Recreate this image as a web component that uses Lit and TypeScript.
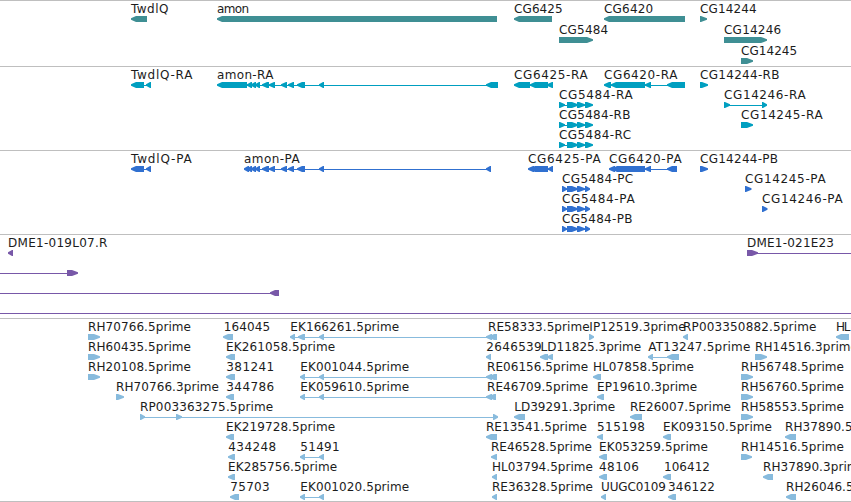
import { css, html, LitElement, svg } from "lit";
import { customElement, property } from "lit/decorators.js";

type Span = [number, number];

interface Feature {
  row: number;
  dir: "L" | "R";
  exons: Span[];
  label?: string;
  text?: Span; // left and right edge of the label
  line?: Span; // connector, when it reaches past the exons
}

interface Track {
  color: string;
  height: number;
  pitch: number;
  features: Feature[];
}

const f = (
  row: number,
  label: string,
  from: number,
  to: number,
  dir: "L" | "R",
  ...exons: Span[]
): Feature => ({ row, label, text: [from, to], dir, exons });

const amonExons: Span[] = [
  [262, 269],
  [269, 275],
  [281, 287],
  [288, 294],
  [297, 305],
  [319, 324],
];

const cg5484r: Span[] = [[559, 565], [567, 578], [577, 585], [585, 593]];
const cg5484p: Span[] = [[562, 567], [567, 578], [577, 585], [585, 590]];

const tracks: Track[] = [
  {
    color: "#3f8f94",
    height: 66,
    pitch: 21,
    features: [
      f(0, "TwdlQ", 131.7, 167.7, "L", [131, 147]),
      f(0, "amon", 217.7, 248.5, "L", [217, 497]),
      f(0, "CG6425", 514.7, 562, "L", [514, 552]),
      f(0, "CG6420", 604.7, 652.5, "L", [604, 685]),
      f(0, "CG14244", 700.7, 756, "R", [700, 707]),
      f(1, "CG5484", 559.7, 607.5, "R", [559, 593]),
      f(1, "CG14246", 724.7, 780.5, "R", [724, 767]),
      f(2, "CG14245", 741.7, 796.5, "R", [741, 753]),
    ],
  },
  {
    color: "#009fc0",
    height: 84,
    pitch: 20,
    features: [
      f(0, "TwdlQ-RA", 131.7, 191.7, "L", [131, 144], [146, 151]),
      f(0, "amon-RA", 217.7, 272.7, "L", [217, 247], [247, 252], [251, 256], [255, 260], ...amonExons, [486, 498]),
      f(0, "CG6425-RA", 514.7, 587, "L", [514, 530], [530, 548], [547, 553]),
      f(0, "CG6420-RA", 604.7, 676.7, "L", [604, 611], [611, 645], [645, 651], [667, 685]),
      f(0, "CG14244-RB", 700.7, 778.7, "R", [700, 708]),
      f(1, "CG5484-RA", 559.7, 632, "R", ...cg5484r),
      f(2, "CG5484-RB", 559.7, 629.7, "R", ...cg5484r),
      f(3, "CG5484-RC", 559.7, 630.4, "R", ...cg5484r),
      f(1, "CG14246-RA", 724.7, 805, "R", [724, 730], [762, 767]),
      f(2, "CG14245-RA", 741.7, 822, "R", [741, 753]),
    ],
  },
  {
    color: "#3070d0",
    height: 84,
    pitch: 20,
    features: [
      f(0, "TwdlQ-PA", 131.7, 191, "L", [131, 144], [146, 151]),
      f(0, "amon-PA", 244.7, 299, "L", [244, 249], [247, 252], [251, 256], [255, 260], ...amonExons, [486, 491]),
      f(0, "CG6425-PA", 528.7, 600, "L", [528, 534], [530, 548], [548, 553]),
      f(0, "CG6420-PA", 609.7, 681, "L", [609, 615], [612, 645], [645, 651], [667, 677]),
      f(0, "CG14244-PB", 700.7, 777.3, "R", [700, 708]),
      f(1, "CG5484-PC", 562.7, 632.5, "R", ...cg5484p),
      f(2, "CG5484-PA", 562.7, 634, "R", ...cg5484p),
      f(3, "CG5484-PB", 562.7, 631.7, "R", ...cg5484p),
      f(1, "CG14245-PA", 745.7, 825, "R", [745, 751.5]),
      f(2, "CG14246-PA", 762.7, 842, "R", [762, 767.5]),
    ],
  },
  {
    color: "#7858a8",
    height: 84,
    pitch: 20,
    features: [
      f(0, "DME1-019L07.R", 8.7, 106.7, "L", [8, 13]),
      { ...f(0, "DME1-021E23", 747.7, 833.3, "R", [747, 758]), line: [747, 851] },
      { row: 1, dir: "R", exons: [[67, 78]], line: [0, 67] },
      { row: 2, dir: "L", exons: [[270, 279]], line: [0, 275] },
      { row: 3, dir: "R", exons: [], line: [0, 851] },
    ],
  },
  {
    color: "#88bbdd",
    height: 184,
    pitch: 20,
    features: [
      f(0, "RH70766.5prime", 88.7, 190.3, "R", [88, 100]),
      f(0, "164045", 224.5, 269.5, "L", [223, 233]),
      f(0, "EK166261.5prime", 291, 398.5, "L", [290, 295], [298, 305], [319, 324], [486, 492], [489, 497]),
      f(0, "RE58333.5prime", 488.7, 589, "L"),
      f(0, "IP12519.3prime", 590, 685, "R", [589, 594]),
      f(0, "RP003350882.5prime", 683.7, 815.7, "L", [683, 688]),
      f(0, "HL", 836.7, 849.7, "L", [836, 849]),

      f(1, "RH60435.5prime", 88.7, 190.3, "R", [88, 100]),
      f(1, "EK261058.5prime", 226.7, 334.5, "L", [226, 235]),
      f(1, "2646539", 487, 541, "L", [486, 491]),
      f(1, "LD11825.3prime", 541.3, 640.5, "L", [540, 548], [547, 553]),
      f(1, "AT13247.5prime", 649, 749.7, "L", [648, 653], [667, 679]),
      f(1, "RH14516.3prime", 755.7, 857.3, "R", [755, 767]),

      f(2, "RH20108.5prime", 88.7, 190.3, "R", [88, 100]),
      f(2, "381241", 227, 273.5, "L", [226, 235]),
      f(2, "EK001044.5prime", 301, 408.5, "L", [300, 305], [319, 324], [486, 492], [489, 497]),
      f(2, "RE06156.5prime", 487.7, 587.5, "L"),
      f(2, "HL07858.5prime", 593.7, 693.3, "L", [593, 601]),
      f(2, "RH56748.5prime", 741.7, 843.3, "R", [741, 753]),

      f(3, "RH70766.3prime", 116.7, 218.3, "R", [116, 124]),
      f(3, "344786", 227, 273.5, "L", [226, 234]),
      f(3, "EK059610.5prime", 301, 408.5, "L", [300, 305], [319, 324], [486, 492], [489, 496]),
      f(3, "RE46709.5prime", 487.7, 587.5, "L"),
      f(3, "EP19610.3prime", 597.7, 696.5, "L", [597, 604]),
      f(3, "RH56760.5prime", 741.7, 843.3, "R", [741, 753]),

      f(4, "RP003363275.5prime", 140.7, 272.5, "R", [140, 145], [176, 182], [493, 498]),
      f(4, "LD39291.3prime", 514.9, 614.5, "L", [514, 525]),
      f(4, "RE26007.5prime", 630.7, 730.3, "L", [630, 642]),
      f(4, "RH58553.5prime", 741.7, 843.3, "R", [741, 753]),

      f(5, "EK219728.5prime", 226.7, 334.5, "L", [226, 234]),
      f(5, "RE13541.5prime", 486.7, 586.3, "L", [486, 497]),
      f(5, "515198", 597.7, 644.3, "L", [597, 603]),
      f(5, "EK093150.5prime", 663.7, 771.3, "L", [663, 671]),
      f(5, "RH37890.5prime", 785.7, 887.3, "L", [785, 796]),

      f(6, "434248", 229, 275.5, "L", [228, 235]),
      f(6, "51491", 301, 339, "L", [300, 305], [319, 324]),
      f(6, "RE46528.5prime", 491.7, 591.3, "L", [491, 497]),
      f(6, "EK053259.5prime", 599.7, 707.3, "L", [599, 607]),
      f(6, "RH14516.5prime", 741.7, 843.3, "R", [741, 752]),

      f(7, "EK285756.5prime", 228.7, 336.5, "L", [228, 235]),
      f(7, "HL03794.5prime", 492.7, 592.3, "L", [492, 497]),
      f(7, "48106", 599.7, 638.3, "L", [599, 607]),
      f(7, "106412", 664.7, 709.3, "L", [663, 671]),
      f(7, "RH37890.3prime", 763.7, 865.3, "L", [763, 773]),

      f(8, "75703", 231, 269, "L", [230, 239]),
      f(8, "EK001020.5prime", 301, 408.5, "L", [300, 305], [319, 324]),
      f(8, "RE36328.5prime", 492.7, 592.3, "L", [492, 497]),
      f(8, "UUGC0109", 601.7, 665.3, "L", [601, 606]),
      f(8, "346122", 668.7, 714.3, "L", [668, 676]),
      f(8, "RH26046.5prime", 786.7, 888.3, "L", [786, 796]),
    ],
  },
];

@customElement("feature-track")
export class FeatureTrack extends LitElement {
  static styles = css`
    :host {
      display: block;
      box-sizing: border-box;
      border-top: 1px solid #bfbfbf;
    }

    .canvas {
      display: block;
      width: 851px;
      overflow: hidden;
    }

    .label {
      font: 12px "DejaVu Sans", "Noto Sans", sans-serif;
      fill: #1c1c1c;
    }

    .line {
      shape-rendering: crispEdges;
    }
  `;

  @property({ attribute: false }) track!: Track;

  exon([a, b]: Span, dir: "L" | "R", top: number) {
    // short exons keep one full-height pixel behind the head
    const head = Math.min(dir === "L" ? 5 : 6, b - a - 1);
    const tip = dir === "L" ? a : b;
    const neck = dir === "L" ? a + head : b - head;
    const back = dir === "L" ? b : a;
    const bottom = top + 6;
    const points = [
      [tip, top + 2.2],
      [neck, top],
      [back, top],
      [back, bottom],
      [neck, bottom],
      [tip, top + 3.8],
    ];
    return svg`<polygon points=${points.join(" ")} />`;
  }

  feature(item: Feature) {
    // the top border takes the first pixel of the track
    const y = item.row * this.track.pitch - 1;
    const { exons, text } = item;
    const line =
      item.line ??
      (exons.length > 1 ? [exons[0][0] + 2, exons[exons.length - 1][1] - 2] : null);
    return svg`
      ${line
        ? svg`<rect class="line" x=${line[0]} y=${y + 19} width=${line[1] - line[0]} height="1" />`
        : null}
      ${exons.map((e) => this.exon(e, item.dir, y + 16))}
      ${text
        ? svg`<text class="label" x=${text[0] - 0.7} y=${y + 13}
            textLength=${text[1] - text[0] + 1.4}>${item.label}</text>`
        : null}
    `;
  }

  render() {
    const { color, height, features } = this.track;
    return html`
      <svg class="canvas" width="851" height=${height - 1} fill=${color}>
        ${features.map((item) => this.feature(item))}
      </svg>
    `;
  }
}

@customElement("app-root")
export class AppRoot extends LitElement {
  static styles = css`
    :host {
      display: block;
      width: 851px;
      height: 502px;
      overflow: hidden;
      background: #fff;
    }

    .tracks {
      display: flex;
      flex-direction: column;
      box-sizing: border-box;
      height: 502px;
      border-bottom: 1px solid #bfbfbf;
    }

    .track {
      flex: none;
    }

    .track:last-child {
      flex: 0 1 auto;
      min-height: 0;
      overflow: hidden;
    }
  `;

  render() {
    return html`
      <div class="tracks">
        ${tracks.map((t) => html`<feature-track class="track" .track=${t}></feature-track>`)}
      </div>
    `;
  }
}
